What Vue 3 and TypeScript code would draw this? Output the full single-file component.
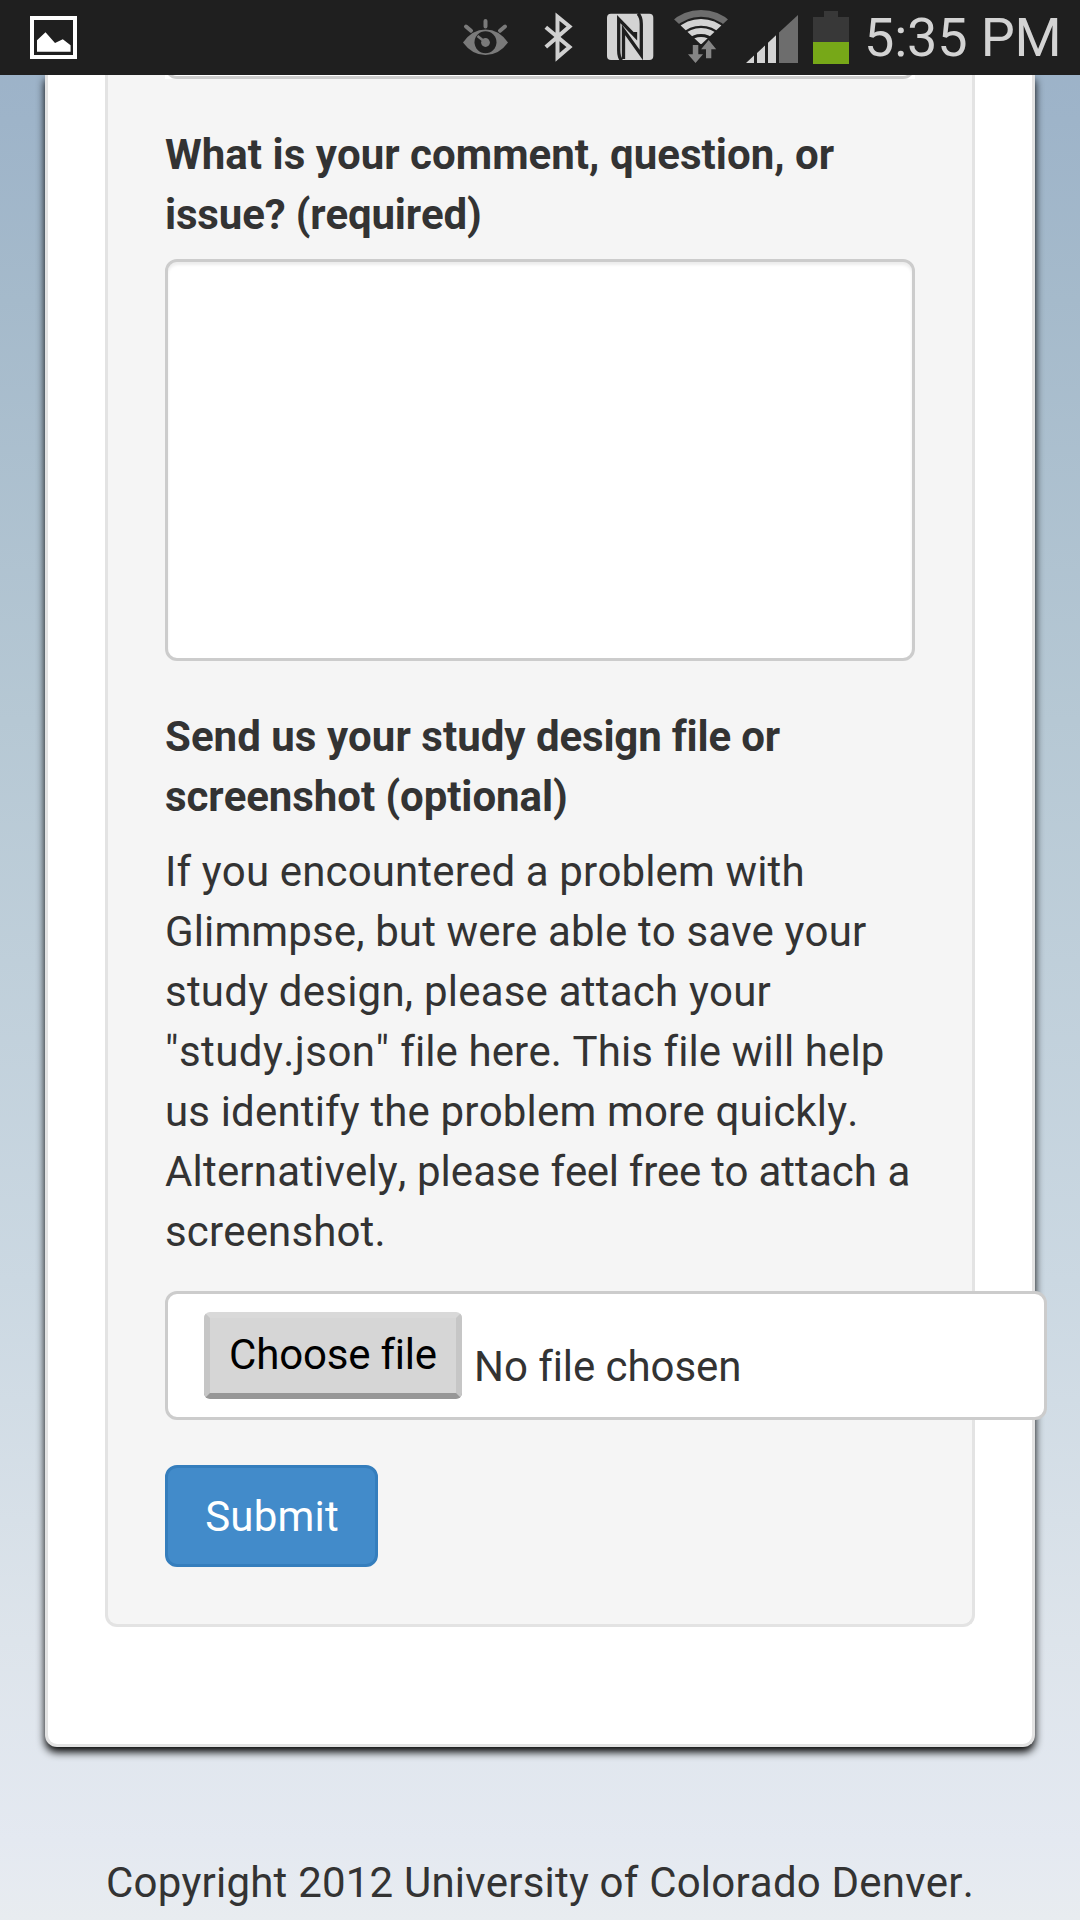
<script setup lang="ts">
interface Segment {
  text: string
  spacing: number
}
type Line = Segment[]

const seg = (text: string, spacing = 0): Segment => ({ text, spacing })

const commentLabel: Line[] = [
  [seg('What is your comment, question, or', 0.03)],
  [seg('issue? (required)', -0.16)],
]
const fileLabel: Line[] = [
  [seg('Send us your study ', 0.03), seg('design file or', -0.18)],
  [seg('screenshot (optional)', -0.07)],
]
const help: Line[] = [
  [seg('If you encountered a problem with', 0.135)],
  [seg('Glimmpse, but were able to save your', 0.125)],
  [seg('study design, please attach your', 0.218)],
  [seg('"study.json" ', 0.45), seg('file here. This file will help', 0.1)],
  [seg('us identify the problem more quickly.', 0.16)],
  [seg('Alternatively, ', 0.18), seg('please ', 0.05), seg('feel free to ', -0.3), seg('attach a', 0.06)],
  [seg('screenshot.', 0.13)],
]
</script>

<template>
  <div class="screen">
    <header class="statusbar">
      <svg class="status-icons" width="860" height="75" viewBox="0 0 860 75">
        <rect x="32" y="18" width="43" height="39" fill="none" stroke="#fff" stroke-width="4" />
        <path d="M37 40.3 45.5 32.3 55 43 62.8 39.3 70.6 45.3V51.7H37z" fill="#fff" />
        <g fill="#7a7a7a" stroke="#7a7a7a">
          <path stroke="none" d="M463 42.5Q472 29.5 485.5 29.5T508 42.5Q499 55 485.5 55T463 42.5z" />
          <circle cx="485.5" cy="42.3" r="11" fill="#1f1f1f" stroke="none" />
          <circle cx="485.5" cy="42.5" r="4.4" stroke="none" />
          <path fill="none" stroke-width="2.6" d="M477.5 36 485 42" />
          <path fill="none" stroke-width="4" stroke-linecap="round" d="M485.5 21v5.5M466 26.5l5 4.3M505 26.5l-5 4.3" />
        </g>
        <path d="M545.8 27.3 569.5 47 557.5 57.3V16.8L569.5 26.5 545.8 47" fill="none" stroke="#d0d0d0" stroke-width="4" />
        <rect x="607" y="13.7" width="46.3" height="46.3" rx="4" fill="#d3d3d3" />
        <path d="M621.5 60.5Q618.7 57 618.7 50V19L635.5 36.500V32M638 13.500Q641.300 17 641.300 24V55L623.500 30V59" fill="none" stroke="#1f1f1f" stroke-width="3.300" />
        <clipPath id="wedge"><path d="M701 44.5 671 16.5V0H731V16.5z" /></clipPath>
        <g clip-path="url(#wedge)" fill="none" stroke="#d3d3d3">
          <circle cx="701" cy="53.7" r="40.3" stroke="#6d6d6d" stroke-width="6.7" />
          <circle cx="701" cy="53.7" r="31.3" stroke-width="6.7" />
          <circle cx="701" cy="53.7" r="22.7" stroke-width="6" />
          <circle cx="701" cy="53.7" r="13.2" stroke-width="7" />
        </g>
        <path fill="#858585" d="M692.8 45h5.5v9.3h4.7L695.5 63 688 54.3h4.8zM708.7 40 716.2 49.3h-4.9v9H706v-9h-4.9z" />
        <path fill="#d3d3d3" d="M746 63 754 55.6V63zM757 63V52.9L765 45.5V63zM768 63V42.7L776 35.3V63z" />
        <path fill="#6d6d6d" d="M779 63V32.5L798 15V63z" />
        <path fill="#383838" d="M824 11h14v6h11v25H813V17h11z" />
        <path fill="#77a818" d="M813 42h36v22H813z" />
      </svg>
      <span class="clock">5:35 PM</span>
    </header>

    <main class="page">
      <section class="card">
        <form class="well" @submit.prevent>
          <div class="previous-field"><div class="previous-input"></div></div>
          <label class="label" for="comment">
            <span v-for="(l, i) in commentLabel" :key="i" class="line"><span v-for="s in l" :key="s.text" :style="{ letterSpacing: s.spacing + 'px' }">{{ s.text }}</span></span>
          </label>
          <textarea id="comment" class="textarea"></textarea>
          <label class="label">
            <span v-for="(l, i) in fileLabel" :key="i" class="line"><span v-for="s in l" :key="s.text" :style="{ letterSpacing: s.spacing + 'px' }">{{ s.text }}</span></span>
          </label>
          <p class="help">
            <span v-for="(l, i) in help" :key="i" class="line"><span v-for="s in l" :key="s.text" :style="{ letterSpacing: s.spacing + 'px' }">{{ s.text }}</span></span>
          </p>
          <div class="file-input">
            <button type="button" class="choose">Choose file</button>
            <span class="file-name">No file chosen</span>
          </div>
          <button type="submit" class="submit">Submit</button>
        </form>
      </section>
      <footer class="footer">Copyright 2012 University of Colorado Denver.</footer>
    </main>
  </div>
</template>

<style>
body { margin: 0; }
</style>

<style scoped>
.screen {
  display: flex;
  flex-direction: column;
  width: 1080px;
  height: 1920px;
  overflow: hidden;
  font: 42px/60px Roboto, sans-serif;
  font-kerning: none;
  font-variant-ligatures: none;
  color: #333;
  background: linear-gradient(#9bb1c8 0, #9eb4c9 120px, #a5bacb 300px, #b6c8d4 720px, #cbd8e2 1280px, #dde4eb 1640px, #e4e9f1 1840px, #e8ecf0 1920px);
}
.statusbar {
  position: relative;
  z-index: 1;
  display: flex;
  flex: none;
  height: 75px;
  background: #1f1f1f;
  color: #d3d3d3;
}
.status-icons { flex: none; }
.clock {
  margin-left: 4px;
  font-size: 54px;
  line-height: 75px;
  letter-spacing: -0.17px;
  white-space: nowrap;
}
.page { flex: 1; }
.card {
  box-sizing: border-box;
  width: 990px;
  height: 1672px;
  margin-left: 45px;
  padding: 0 57px;
  border: 3px solid #e3e3e3;
  border-top: 0;
  border-radius: 0 0 12px 12px;
  background: #fff;
  box-shadow: 0 5px 9px #000;
}
.well {
  box-sizing: border-box;
  width: 870px;
  height: 1552px;
  padding: 0 57px;
  border: 3px solid #e3e3e3;
  border-top: 0;
  border-radius: 0 0 12px 12px;
  background: #f5f5f5;
}
.previous-field {
  display: flex;
  align-items: flex-end;
  height: 4px;
  margin-bottom: 45px;
  overflow: hidden;
  background: #fff;
}
.previous-input {
  box-sizing: border-box;
  flex: 1;
  height: 60px;
  border: 3px solid #ccc;
  border-radius: 12px;
  background: #fff;
}
.label {
  display: block;
  margin-bottom: 14px;
  padding-top: 1px;
  font-weight: 700;
}
.line {
  display: block;
  white-space: pre;
}
.textarea {
  box-sizing: border-box;
  display: block;
  width: 750px;
  height: 402px;
  margin: 0 0 45px;
  padding: 18px 36px;
  border: 3px solid #ccc;
  border-radius: 12px;
  background: #fff;
  box-shadow: inset 0 3px 3px rgba(0, 0, 0, 0.075);
  resize: none;
  outline: none;
}
.help {
  margin: 0 0 29px;
  padding-top: 1px;
}
.file-input {
  box-sizing: border-box;
  display: flex;
  align-items: flex-start;
  width: 882px;
  height: 129px;
  margin-bottom: 45px;
  padding: 18px 36px;
  border: 3px solid #ccc;
  border-radius: 12px;
  background: #fff;
}
.choose {
  box-sizing: border-box;
  width: 258px;
  height: 87px;
  padding: 0 0 2px;
  border: 6px solid;
  border-color: #d9d9d9 #c6c6c6 #979797;
  border-radius: 6px;
  background: #d6d6d6;
  color: #000;
  font: 42px/60px Roboto, sans-serif;
  font-kerning: none;
  letter-spacing: -0.2px;
}
.file-name {
  margin: 25px 0 0 12px;
  letter-spacing: -0.06px;
  white-space: nowrap;
}
.submit {
  box-sizing: border-box;
  display: block;
  width: 213px;
  height: 102px;
  padding: 2px 0 0 1px;
  border: 3px solid #357ebd;
  border-radius: 12px;
  background: #428bca;
  color: #fff;
  font: 42px/60px Roboto, sans-serif;
  font-kerning: none;
  letter-spacing: 0.2px;
}
.footer {
  margin-top: 106px;
  letter-spacing: 0.2px;
  text-align: center;
  white-space: nowrap;
}
</style>
